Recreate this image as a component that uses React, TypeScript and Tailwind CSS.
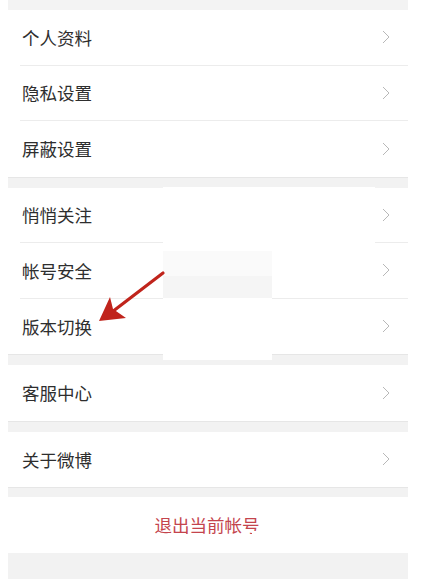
import React from "react";

// 设置页：分组列表 + 退出按钮
const groups: string[][] = [
  ["个人资料", "隐私设置", "屏蔽设置"],
  ["悄悄关注", "帐号安全", "版本切换"],
  ["客服中心"],
  ["关于微博"],
];

function Chevron() {
  return (
    <svg width="8" height="14" viewBox="0 0 8 14" className="shrink-0">
      <path d="M1 1 L7 7 L1 13" fill="none" stroke="#b8b8b8" strokeWidth="1" />
    </svg>
  );
}

function Row({ label, last }: { label: string; last: boolean }) {
  return (
    <div className="bg-white pl-3">
      <div
        className={
          "h-[55.5px] flex items-center justify-between pl-[2px] pr-[18px] " +
          (last ? "" : "border-b border-[#ececec]")
        }
      >
        <span className="text-[17.5px] text-[#2e2e2e] leading-none">{label}</span>
        <Chevron />
      </div>
    </div>
  );
}

function Band({ h }: { h: string }) {
  return <div className={"bg-[#f2f2f2] border-t border-[#e6e6e6] " + h}></div>;
}

export default function App() {
  return (
    <div
      className="relative w-[427px] h-[579px] bg-white overflow-hidden"
      style={{ fontFamily: '"Noto Sans CJK SC", "Noto Sans", sans-serif' }}
    >
      <div className="ml-2 w-[400px] flex flex-col">
        <div className="h-[10px] bg-[#f3f3f3]"></div>
        {groups.map((g, gi) => (
          <React.Fragment key={gi}>
            {gi > 0 && <Band h="h-[11px]" />}
            {g.map((label, i) => (
              <Row key={label} label={label} last={i === g.length - 1} />
            ))}
          </React.Fragment>
        ))}
        <Band h="h-[10px]" />
        <div className="h-[55.5px] bg-white flex items-center justify-center">
          <span className="text-[17.5px] text-[#c4444d] leading-none pr-[2px]">退出当前帐号</span>
        </div>
        <div className="h-[27px] bg-[#f2f2f2]"></div>
      </div>

      {/* 截图上的白色遮挡块 */}
      <div className="absolute left-[163px] top-[187px] w-[212px] h-[56px] bg-white"></div>
      <div className="absolute left-[163px] top-[243px] w-[109px] h-[117px] bg-white">
        <div className="mt-[8px] h-[25px] bg-[#fafafa]"></div>
        <div className="h-[22px] bg-[#f5f5f5]"></div>
      </div>
      <div className="absolute left-[252px] top-[531px] w-[156px] h-[7px] bg-white"></div>

      {/* 红色箭头标注 */}
      <svg className="absolute left-0 top-0" width="427" height="579">
        <line x1="163" y1="273" x2="112" y2="312" stroke="#c0241c" strokeWidth="3.2" strokeLinecap="round" />
        <polygon points="99,321 110,297 113,309 126,318" fill="#c0241c" />
      </svg>
    </div>
  );
}
